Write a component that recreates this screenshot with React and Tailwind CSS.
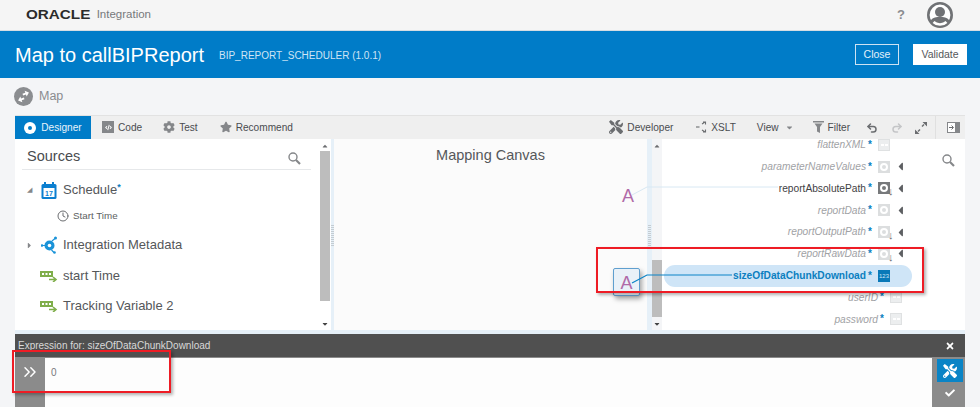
import { FaTools, FaCog, FaStar, FaCheck, FaTimes, FaCaretDown, FaCaretLeft, FaCaretRight, FaCaretUp, FaCode } from "react-icons/fa";
import { Clock, ChevronsRight, Undo2, Redo2 } from "lucide-react";

const targets = [
  { name: "flattenXML", kind: "doc", slot: true },
  { name: "parameterNameValues", kind: "ring", arrow: true, slot: true },
  { name: "reportAbsolutePath", kind: "ring", arrow: true, slot: true, mapped: true, down: true },
  { name: "reportData", kind: "ring", arrow: true, slot: true },
  { name: "reportOutputPath", kind: "ring", arrow: true, slot: true, down: true },
  { name: "reportRawData", kind: "ring", arrow: true, slot: true, down: true },
  { name: "sizeOfDataChunkDownload", kind: "num", selected: true, slot: true },
  { name: "userID", kind: "doc" },
  { name: "password", kind: "doc" },
];

function TypeIcon({ kind, mapped }) {
  if (kind === "num") {
    return (
      <span className="flex h-[12px] w-[12px] items-center justify-center bg-[#0a79b8] text-[6px] leading-none text-[#cfe5f7]">
        123
      </span>
    );
  }
  if (kind === "ring") {
    return (
      <span className={`flex h-[12px] w-[12px] items-center justify-center ${mapped ? "bg-[#77797b]" : "bg-[#dcdedf]"}`}>
        <span className="h-[8px] w-[8px] rounded-full border-2 border-white" />
      </span>
    );
  }
  return (
    <span className="flex h-[12px] w-[12px] items-center justify-center gap-[1px] border border-[#dfe1e2] bg-[#eceeef]">
      <span className="h-[2px] w-[3px] bg-white" />
      <span className="h-[2px] w-[3px] bg-white" />
    </span>
  );
}

function TargetRow({ item }) {
  const color = item.selected
    ? "font-bold not-italic text-[#0b7fc0]"
    : item.mapped
      ? "not-italic text-[#3f4144]"
      : "italic text-[#9fa2a5]";
  return (
    <div className={`relative flex h-[21.8px] shrink-0 items-center justify-end ${item.slot ? "pr-[58px]" : "pr-[63px]"}`}>
      {item.selected && <div className="absolute left-[2px] right-[53px] top-0 h-[22px] rounded-full bg-[#cfe5f7]" />}
      <span className={`relative text-[10.2px] ${color}`}>{item.name}</span>
      <span className="relative ml-[2px] h-[8px] w-[10px] text-[10px] font-bold leading-[8px] text-[#0b7fc0]">*</span>
      <span className="relative flex w-[12px] items-center">
        <TypeIcon kind={item.kind} mapped={item.mapped} />
        {item.down && <span className="absolute left-[10px] top-[4px] text-[11px] leading-none text-[#6b6d70]">↓</span>}
      </span>
      {item.slot && (
        <span className="relative flex w-[17px] justify-end">
          {item.arrow && <FaCaretLeft className="text-[13px] text-[#5d5f62]" />}
        </span>
      )}
    </div>
  );
}

function Tab({ icon, label, className }) {
  return (
    <div className={`flex items-center gap-[4px] text-[10.1px] text-[#4a4c4f] ${className || ""}`}>
      {icon}
      <span>{label}</span>
    </div>
  );
}

function Scrollbar({ thumbClass, width }) {
  return (
    <div className={`relative flex shrink-0 flex-col items-center py-[3px] ${width}`}>
      <FaCaretUp className="text-[8px] text-[#6b6d70]" />
      <div className={`w-[10px] bg-[#bdbdbd] ${thumbClass}`} />
      <FaCaretDown className="absolute bottom-[2px] text-[8px] text-[#444]" />
    </div>
  );
}

function Gutter({ width }) {
  return (
    <div className={`flex shrink-0 flex-col items-center bg-[#e6f0f8] pt-[85px] ${width}`}>
      <div className="h-[22px] w-[3px] bg-[repeating-linear-gradient(0deg,#c4ccd2_0,#c4ccd2_1px,transparent_1px,transparent_2px)]" />
    </div>
  );
}

function SourceRow({ icon, label, star, caret, height }) {
  return (
    <div className={`flex items-center ${height}`}>
      <span className="flex w-[15px] justify-center text-[9px] text-[#85878a]">{caret}</span>
      <span className="flex w-[24px] justify-center">{icon}</span>
      <span className="ml-[2px] text-[13px] text-[#55575a]">{label}</span>
      {star && <span className="mb-[5px] text-[9px] font-bold leading-none text-[#0b7fc0]">*</span>}
    </div>
  );
}

function SearchIcon() {
  return (
    <svg width="13" height="13" viewBox="0 0 13 13" fill="none" stroke="#85878a">
      <circle cx="5" cy="5" r="4" strokeWidth="1.4" />
      <path d="M8 8l4 4" strokeWidth="2.2" />
    </svg>
  );
}

function VarIcon() {
  return (
    <svg width="18" height="12" viewBox="0 0 18 12">
      <rect x="0" y="1" width="13" height="6" fill="#7fae4a" />
      <rect x="2" y="3" width="2" height="2" fill="#fff" />
      <rect x="5.5" y="3" width="2" height="2" fill="#fff" />
      <rect x="9" y="3" width="2" height="2" fill="#fff" />
      <path d="M9 9.5h6M13 7l3 2.5-3 2.5" fill="none" stroke="#7fae4a" strokeWidth="1.6" />
    </svg>
  );
}

function CalendarIcon() {
  return (
    <svg width="16" height="17" viewBox="0 0 16 17">
      <rect x="0.5" y="2" width="15" height="15" rx="1.5" fill="#0b7fd0" />
      <rect x="2.5" y="6" width="11" height="9" fill="#fff" />
      <rect x="3" y="0" width="2" height="4" fill="#0b7fd0" />
      <rect x="11" y="0" width="2" height="4" fill="#0b7fd0" />
      <text x="8" y="13.5" textAnchor="middle" fontSize="7" fontWeight="700" fill="#0b7fd0" fontFamily="Liberation Sans">17</text>
    </svg>
  );
}

function MetadataIcon() {
  return (
    <svg width="17" height="18" viewBox="0 0 17 18">
      <circle cx="8.5" cy="9.5" r="5" fill="#1a93d8" />
      <circle cx="8.5" cy="9.5" r="1.8" fill="#fff" />
      <path d="M0 9.5h4M11 5l3-2.500M10.500 14l2.500 2.500" stroke="#1a93d8" strokeWidth="1.2" />
      <circle cx="1" cy="9.5" r="1.3" fill="#1a93d8" />
      <circle cx="14.5" cy="2" r="1.5" fill="#1a93d8" />
      <circle cx="13.5" cy="16.5" r="1.3" fill="#1a93d8" />
    </svg>
  );
}

function MapIcon() {
  return (
    <svg width="19" height="19" viewBox="0 0 19 19">
      <circle cx="9.5" cy="9.5" r="9.5" fill="#8b8d90" />
      <g fill="#fff" transform="rotate(-20 9.500 9.500)">
        <path d="M3 11.500l3.500-3v2h3v2h-3v2z" />
        <path d="M16 7.500l-3.500 3v-2h-3v-2h3v-2z" />
      </g>
    </svg>
  );
}

function UserIcon() {
  return (
    <svg width="26" height="26" viewBox="0 0 26 26">
      <circle cx="13" cy="13" r="11.700" fill="#fff" stroke="#707275" strokeWidth="2.600" />
      <circle cx="13" cy="10" r="5" fill="#707275" />
      <path d="M3.500 18.500c2.500-3 6-3.700 9.500-3.700s7 .7 9.500 3.700C20 23 16.500 24.500 13 24.500S6 23 3.500 18.500z" fill="#707275" />
      <path d="M6.500 20c1.800 1.800 4 2.500 6.500 2.500s4.700-.7 6.500-2.500" fill="none" stroke="#fff" strokeWidth="2.500" />
    </svg>
  );
}

function XsltIcon() {
  return (
    <svg width="11" height="12" viewBox="0 0 11 12" fill="none" stroke="#6b6d70" strokeWidth="1.1">
      <path d="M0 6h3.500" />
      <path d="M6 3l3-2M7 1h2.500v2.500M6 9l3 2M7 11h2.500V8.500" />
    </svg>
  );
}

function FilterIcon() {
  return (
    <svg width="11" height="12" viewBox="0 0 11 12" fill="#85878a">
      <rect x="0" y="0" width="11" height="1.500" />
      <path d="M1.500 2.500h8L7 6v6l-3-1.500V6z" />
    </svg>
  );
}

function ExpandIcon() {
  return (
    <svg width="12" height="12" viewBox="0 0 12 12" fill="#6b6d70">
      <path d="M12 0v4.500L7.500 0zM0 12V7.500L4.500 12z" />
      <path d="M9 2.500L7 4.500M3 9.500l2-2" stroke="#6b6d70" strokeWidth="1.500" />
    </svg>
  );
}

function PanelIcon() {
  return (
    <svg width="13" height="11" viewBox="0 0 13 11">
      <rect x="0.5" y="0.500" width="12" height="10" fill="#fff" stroke="#85878a" />
      <rect x="8" y="0.500" width="4.500" height="10" fill="#85878a" />
      <path d="M2 5.500h4M4.500 3.500l2 2-2 2" fill="none" stroke="#6b6d70" />
    </svg>
  );
}

export default function App() {
  return (
    <div className="relative h-[407px] w-[980px] overflow-hidden bg-[#f4f5f7] font-['Liberation_Sans',Arial,sans-serif]">
      {/* top bar */}
      <div className="flex h-[31px] items-center border-b border-[#d5dde3] bg-[#f5f5f5] pl-[26px] pr-[27px]">
        <span className="origin-left scale-x-[1.27] text-[12px] font-bold leading-none text-[#2b2b2b]">ORACLE</span>
        <span className="ml-[20px] text-[11.5px] text-[#77797c]">Integration</span>
        <span className="ml-auto mr-[22px] text-[13px] font-bold text-[#8a8c8f]">?</span>
        <UserIcon />
      </div>

      {/* blue title bar */}
      <div className="flex h-[47px] items-center bg-[#007cc8] pl-[15px] pr-[13px]">
        <span className="text-[20px] text-white">Map to callBIPReport</span>
        <span className="ml-[15px] mt-[1px] text-[10px] text-[#cfe5f5]">BIP_REPORT_SCHEDULER (1.0.1)</span>
        <button className="ml-auto flex h-[21px] w-[44px] items-center justify-center border border-[#cde3f3] text-[10.5px] text-[#e3f1fa]">Close</button>
        <button className="ml-[14px] flex h-[21px] w-[54px] items-center justify-center bg-white text-[10.5px] text-[#55575a]">Validate</button>
      </div>

      {/* map heading */}
      <div className="flex h-[37px] items-center gap-[6px] pl-[14px]">
        <MapIcon />
        <span className="text-[12.5px] text-[#8a8c8f]">Map</span>
      </div>

      {/* mapper panel */}
      <div className="mx-[15px] w-[950px]">
        <div className="flex h-[24px] items-center border-t border-[#e2e2e2] bg-[#efefef] text-[#4a4c4f]">
          <div className="flex h-full w-[76px] items-center justify-center gap-[5px] bg-[#007cc8] text-[10.1px] text-[#e8f3fb]">
            <span className="flex h-[12px] w-[12px] items-center justify-center rounded-full bg-white">
              <span className="h-[4px] w-[4px] rounded-full bg-[#007cc8]" />
            </span>
            Designer
          </div>
          <Tab
            className="ml-[11px]"
            icon={
              <span className="flex h-[12px] w-[12px] items-center justify-center bg-[#85878a] text-white">
                <FaCode className="text-[7px]" />
              </span>
            }
            label="Code"
          />
          <Tab className="ml-[21px]" icon={<FaCog className="text-[12px] text-[#85878a]" />} label="Test" />
          <Tab className="ml-[22px]" icon={<FaStar className="text-[12px] text-[#85878a]" />} label="Recommend" />
          <Tab className="ml-auto" icon={<FaTools className="text-[14px] text-[#6b6d70]" />} label="Developer" />
          <Tab className="ml-[23px]" icon={<XsltIcon />} label="XSLT" />
          <div className="ml-[21px] flex items-center gap-[6px] text-[10.1px]">
            View <FaCaretDown className="text-[9px] text-[#85878a]" />
          </div>
          <Tab className="ml-[19px]" icon={<FilterIcon />} label="Filter" />
          <Undo2 className="ml-[16px] h-[12px] w-[12px] text-[#6b6d70]" strokeWidth={3} />
          <Redo2 className="ml-[13px] h-[12px] w-[12px] text-[#c4c5c7]" strokeWidth={3} />
          <span className="ml-[12px] flex"><ExpandIcon /></span>
          <div className="ml-[8px] h-full w-px bg-[#e0e0e0]" />
          <span className="ml-[11px] mr-[5px] flex"><PanelIcon /></span>
        </div>

        <div className="flex h-[191px]">
          {/* sources */}
          <div className="w-[303px] shrink-0 bg-white pl-[7px] pr-[7px]">
            <div className="flex h-[31px] items-center border-b border-[#e6e8ea] pl-[5px] pr-[10px] pt-[5px]">
              <span className="text-[14.5px] text-[#4a4c4f]">Sources</span>
              <span className="ml-auto mt-[3px] flex"><SearchIcon /></span>
            </div>
            <div className="pt-[5px]">
              <SourceRow icon={<CalendarIcon />} label="Schedule" star caret={<span className="text-[7px]">◢</span>} height="h-[30px]" />
              <div className="flex h-[22px] items-center pl-[35px] text-[9.8px] text-[#5d5f62]">
                <Clock className="mr-[4px] h-[12px] w-[12px] text-[#6b6d70]" />
                Start Time
              </div>
              <div className="h-[3px]" />
              <SourceRow icon={<MetadataIcon />} label="Integration Metadata" caret={<FaCaretRight />} height="h-[30px]" />
              <SourceRow icon={<VarIcon />} label="start Time" height="h-[31px]" />
              <SourceRow icon={<VarIcon />} label="Tracking Variable 2" height="h-[30px]" />
            </div>
          </div>
          <Scrollbar width="w-[13px] bg-white" thumbClass="mt-[1px] h-[150px]" />
          <Gutter width="w-[3px]" />

          {/* canvas */}
          <div className="w-[313px] shrink-0 bg-[#fbfbfb] pt-[6px] text-center text-[14.5px] text-[#55575a]">Mapping Canvas</div>

          <Gutter width="w-[5px]" />
          <Scrollbar width="w-[10px] bg-[#f4f5f7]" thumbClass="mt-[110px] h-[57px]" />

          {/* targets */}
          <div className="relative flex min-w-0 flex-1 flex-col overflow-hidden bg-white">
            <div className="mt-[-5px] flex flex-col">
              {targets.map((t) => (
                <TargetRow key={t.name} item={t} />
              ))}
            </div>
            <span className="absolute right-[10px] top-[15px] flex"><SearchIcon /></span>
          </div>
        </div>

        <div className="h-[4px] bg-[#e6f0f8]" />

        {/* expression builder */}
        <div className="flex h-[24px] items-center justify-between border-b border-[#8b8b8b] bg-[#505050] pl-[3px] pr-[10px] text-[10px] text-[#d9d9d9]">
          <span>Expression for: sizeOfDataChunkDownload</span>
          <FaTimes className="text-[10px] text-white" />
        </div>
        <div className="flex h-[49px]">
          <div className="flex w-[30px] shrink-0 justify-center bg-[#8b8b8b] pt-[4px]">
            <ChevronsRight className="h-[20px] w-[20px] text-white" strokeWidth={1.8} />
          </div>
          <div className="flex-1 bg-[#fdfdfd] pl-[6px] pt-[7px] text-[10px] text-[#77797c]">0</div>
          <div className="flex w-[33px] shrink-0 flex-col items-center bg-[#8b8b8b] pl-[2px] pt-[1px]">
            <span className="flex h-[23px] w-[26px] items-center justify-center bg-[#0a84c6]">
              <FaTools className="text-[14px] text-white" />
            </span>
            <FaCheck className="mt-[6px] text-[10px] text-white" />
          </div>
        </div>
      </div>

      {/* mapped nodes on the canvas */}
      <svg className="absolute left-0 top-0" width="980" height="407">
        <path d="M632 195L647 187H778" fill="none" stroke="#d8e8f3" strokeWidth="1" />
      </svg>
      <span className="absolute left-[622px] top-[184px] text-[18px] leading-[24px] text-[#b06aa8]">A</span>
      <div className="absolute left-[613px] top-[268px] flex h-[28px] w-[27px] items-center justify-center rounded-[2px] border border-[#5f9fcf] bg-[#e9f1f8] pt-[3px] text-[18px] text-[#b06aa8] shadow-[2px_3px_5px_rgba(0,0,0,0.35)]">
        A
      </div>
      <svg className="absolute left-0 top-0" width="980" height="407">
        <path d="M632 283L647 275H732" fill="none" stroke="#0b84c8" strokeWidth="1.2" />
      </svg>

      {/* red callouts */}
      <div className="absolute left-[596px] top-[247px] h-[46px] w-[328px] border-2 border-[#ee1c25] shadow-[2px_2px_3px_rgba(0,0,0,0.3)]" />
      <div className="absolute left-[12px] top-[350px] h-[43px] w-[159px] border-2 border-[#ee1c25] shadow-[2px_2px_3px_rgba(0,0,0,0.3)]" />
    </div>
  );
}
